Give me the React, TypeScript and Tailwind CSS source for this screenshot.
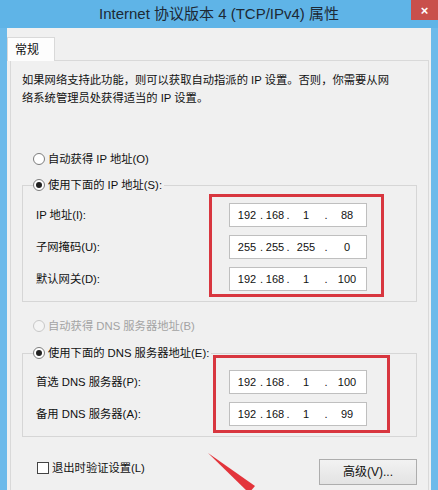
import React from 'react';

const font = "font-['Liberation_Sans','Noto_Sans_CJK_SC',sans-serif]";

function IpBox({ value }: { value: string[] }) {
  const widths = ['w-[20px]', 'w-[18px]', 'w-[28px]', 'w-[30px]'];
  const dots = ['w-[9px]', 'w-[8px]', 'w-[12px]'];
  return (
    <div className="flex h-[24px] w-[138px] items-center border border-[#bfbfbf] bg-white pl-[7px] text-[11px] text-[#111]">
      {value.map((v, i) => (
        <React.Fragment key={i}>
          <span className={`${widths[i]} flex justify-center`}>{v}</span>
          {i < 3 && <span className={`${dots[i]} flex justify-center`}>.</span>}
        </React.Fragment>
      ))}
    </div>
  );
}

function Radio({ checked, disabled, label }: { checked?: boolean; disabled?: boolean; label: string }) {
  return (
    <div className={`flex h-[18px] items-center gap-[3px] ${disabled ? 'text-[#a3a3a3]' : 'text-[#111]'}`}>
      <span
        className={`flex h-[12px] w-[12px] items-center justify-center rounded-full border ${
          disabled ? 'border-[#c8c8c8] bg-[#f4f4f4]' : 'border-[#7d7d7d] bg-white'
        }`}
      >
        {checked && <span className="h-[6px] w-[6px] rounded-full bg-[#222]" />}
      </span>
      <span className="leading-[18px] pr-[2px]">{label}</span>
    </div>
  );
}

export default function App() {
  return (
    <div className={`relative flex h-[490px] w-[438px] flex-col overflow-hidden bg-[#6cbaea] ${font} text-[11.3px]`}>
      {/* title bar */}
      <div className="relative flex h-[28px] shrink-0 items-center justify-center bg-[#5fb4e7]">
        <span className="text-[15px] leading-[20px] text-[#1d2935]">Internet 协议版本 4 (TCP/IPv4) 属性</span>
        <div className="absolute right-0 top-0 flex h-[20px] w-[27px] items-center justify-center bg-[#c9504b] text-[13px] font-bold leading-none text-white">
          ×
        </div>
      </div>

      <div className="mx-[7px] flex flex-1 flex-col bg-[#f0f0f0] pt-[9px]">
        {/* tab */}
        <div className="relative z-10 -mb-px flex h-[24px] w-[48px] items-start border border-b-0 border-[#d9d9d9] bg-[#fdfdfd] pl-[7px] pt-[4px] text-[12px] leading-[16px] text-[#111]">
          常规
        </div>

        {/* panel */}
        <div className="ml-[3px] mr-[2px] flex flex-1 flex-col border border-b-0 border-[#d9d9d9] bg-[#f0f0f0] px-[11px] pt-[10px] text-[#111]">
          <p className="whitespace-nowrap leading-[18px]">
            如果网络支持此功能，则可以获取自动指派的 IP 设置。否则，你需要从网
            <br />
            络系统管理员处获得适当的 IP 设置。
          </p>

          <div className="ml-[11px] mt-[43px]">
            <Radio label="自动获得 IP 地址(O)" />
          </div>

          <fieldset className="mt-[8px] border border-[#d6d6d6] pb-[4px]">
            <legend className="ml-[10px]">
              <Radio checked label="使用下面的 IP 地址(S):" />
            </legend>
            <div className="flex">
              <div className="flex w-[186px] flex-col gap-[8px] pl-[13px] pt-[9px]">
                <div className="leading-[24px]">IP 地址(I):</div>
                <div className="leading-[24px]">子网掩码(U):</div>
                <div className="leading-[24px]">默认网关(D):</div>
              </div>
              <div className="flex w-[175px] flex-col gap-[8px] border-[3px] border-[#d8363f] pb-[3px] pl-[17px] pt-[6px]">
                <IpBox value={['192', '168', '1', '88']} />
                <IpBox value={['255', '255', '255', '0']} />
                <IpBox value={['192', '168', '1', '100']} />
              </div>
            </div>
          </fieldset>

          <div className="ml-[11px] mt-[15px]">
            <Radio disabled label="自动获得 DNS 服务器地址(B)" />
          </div>

          <fieldset className="mt-[9px] border border-[#d6d6d6] pb-[3px]">
            <legend className="ml-[10px]">
              <Radio checked label="使用下面的 DNS 服务器地址(E):" />
            </legend>
            <div className="flex">
              <div className="flex w-[190px] flex-col gap-[8px] pl-[13px] pt-[8px]">
                <div className="leading-[24px]">首选 DNS 服务器(P):</div>
                <div className="leading-[24px]">备用 DNS 服务器(A):</div>
              </div>
              <div className="-mt-[7px] flex w-[177px] flex-col gap-[8px] border-[3px] border-[#d8363f] pb-[4px] pl-[13px] pt-[12px]">
                <IpBox value={['192', '168', '1', '100']} />
                <IpBox value={['192', '168', '1', '99']} />
              </div>
            </div>
          </fieldset>

          <div className="flex items-start justify-between">
            <div className="ml-[15px] mt-[25px] flex items-center gap-[3px]">
              <span className="h-[12px] w-[12px] border border-[#444] bg-white" />
              <span className="leading-[12px]">退出时验证设置(L)</span>
            </div>
            <button className="mt-[22px] h-[26px] w-[98px] border border-[#adadad] bg-gradient-to-b from-[#f2f2f2] to-[#e3e3e3] text-[12px] text-[#111]">
              高级(V)...
            </button>
          </div>
        </div>
      </div>

      {/* annotation arrow */}
      <svg className="pointer-events-none absolute left-0 top-0" width="438" height="490" viewBox="0 0 438 490">
        <polygon points="208,453 255,486 249,493" fill="#e3343b" />
      </svg>
    </div>
  );
}
